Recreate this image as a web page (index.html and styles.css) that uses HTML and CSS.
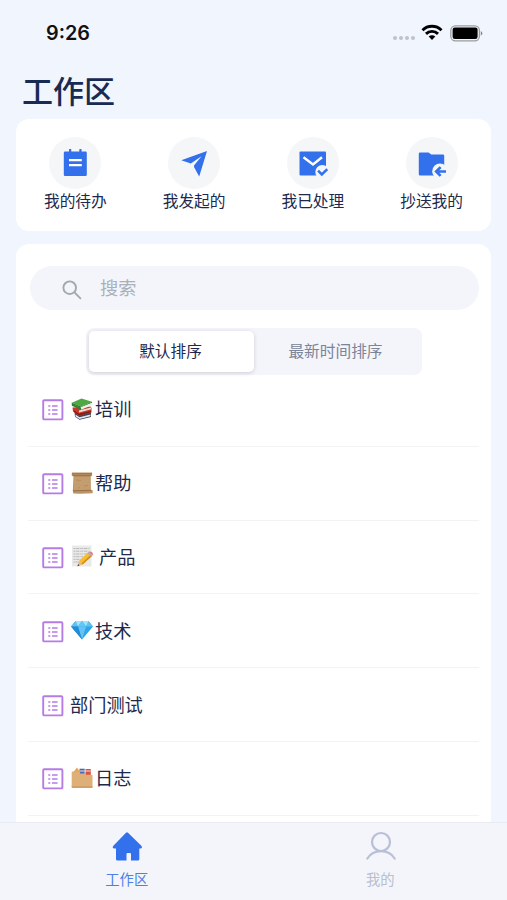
FILE: index.html
```html
<!DOCTYPE html>
<html lang="zh-CN">
  <head>
    <meta charset="UTF-8" />
    <meta name="viewport" content="width=device-width, initial-scale=1.0" />
    <title>工作区</title>
    <link rel="stylesheet" href="styles.css">
  </head>
  <body>
    <svg class="symbols" width="0" height="0">
      <symbol id="list" viewBox="0 0 22 22">
        <rect x="1.2" y="1.2" width="19.2" height="19.2" rx="1" fill="none" stroke="#b57ce6" stroke-width="1.9" />
        <path d="M6.3 7h2M6.3 11h2M6.3 15h2M10 7h5.6M10 11h5.6M10 15h5.6" stroke="#b57ce6" stroke-width="1.5" />
      </symbol>
    </svg>

    <header class="statusbar">
      <span class="clock">9:26</span>
      <div class="signals">
        <svg width="24" height="6" viewBox="0 0 24 6" class="dots">
          <g fill="#bfc2c8">
            <circle cx="3" cy="3" r="2" /><circle cx="9" cy="3" r="2" />
            <circle cx="15" cy="3" r="2" /><circle cx="21" cy="3" r="2" />
          </g>
        </svg>
        <svg width="22" height="17" viewBox="0 0 22 17" class="wifi">
          <g fill="none" stroke="#000" stroke-width="2.9">
            <path d="M1.5 6.2a13.5 13.5 0 0 1 19 0" />
            <path d="M5 9.9a8.500 8.500 0 0 1 12 0" />
          </g>
          <path d="M7.7 12.6a4.700 4.700 0 0 1 6.600 0L11 16z" />
        </svg>
        <svg width="33" height="17" viewBox="0 0 33 17">
          <rect x=".8" y=".8" width="28.6" height="15" rx="4.6" fill="none" stroke="#9b9da1" stroke-width="1.3" />
          <rect x="2.6" y="2.6" width="25" height="11.4" rx="2.2" />
          <path d="M30.8 5.900q1.500.8 1.500 2.400t-1.500 2.400z" fill="#85878b" />
        </svg>
      </div>
    </header>

    <h1 class="title">工作区</h1>

    <nav class="card shortcuts">
      <a class="shortcut">
        <span class="circle">
          <svg width="28" height="30" viewBox="0 0 28 30">
            <path d="M4 3.500H8V1.500q0-.6.6-.6H9.700q.6 0 .6.6v2h8V1.500q0-.6.6-.6h1.100q.6 0 .6.6v2h4q1.200 0 1.200 1.200v22q0 1.200-1.200 1.200H4q-1.200 0-1.200-1.200v-22q0-1.200 1.200-1.200z" fill="#3370eb" />
            <path d="M8 12.200h12.800M8 17.200h12.800" stroke="#fff" stroke-width="2.300" />
          </svg>
        </span>
        我的待办
      </a>
      <a class="shortcut">
        <span class="circle">
          <svg width="28" height="30" viewBox="0 0 28 30">
            <path d="M27 3L1.300 12.200L10.800 15.600L21.500 8.300L14 17.500V19L19.200 28.500z" fill="#3370eb" />
          </svg>
        </span>
        我发起的
      </a>
      <a class="shortcut">
        <span class="circle">
          <svg width="30" height="30" viewBox="0 0 30 30">
            <rect x="1.500" y="3.500" width="26.500" height="24" rx="1" fill="#3370eb" />
            <path d="M5.500 9.200l9.500 7.300l9-7.300" fill="none" stroke="#fff" stroke-width="2.400" />
            <circle cx="24.300" cy="24" r="7" fill="#f4f6f8" />
            <path d="M20.100 22.700l3.700 3.700l5.500-5.200" fill="none" stroke="#3370eb" stroke-width="2.500" />
          </svg>
        </span>
        我已处理
      </a>
      <a class="shortcut">
        <span class="circle">
          <svg width="30" height="30" viewBox="0 0 30 30">
            <path d="M3 4.500h8.500l2.800 2H26q1.200 0 1.200 1.200v18.600q0 1.200-1.200 1.200H3q-1.200 0-1.200-1.200V5.700q0-1.200 1.200-1.200z" fill="#3370eb" />
            <circle cx="23" cy="23.200" r="7.800" fill="#f4f6f8" />
            <path d="M29 23.500H20M23.600 19.100l-4.400 4.400l4.400 4.400" fill="none" stroke="#3370eb" stroke-width="2.700" />
          </svg>
        </span>
        抄送我的
      </a>
    </nav>

    <main class="card content">
      <div class="search">
        <svg width="20" height="20" viewBox="0 0 20 20">
          <g fill="none" stroke="#a3a8ae" stroke-width="1.900">
            <circle cx="7.700" cy="7.700" r="6.300" />
            <path d="M12.200 12.200l6.700 6.700" />
          </g>
        </svg>
        <span>搜索</span>
      </div>

      <div class="sort">
        <div class="sort-item active">默认排序</div>
        <div class="sort-item">最新时间排序</div>
      </div>

      <ul class="groups">
        <li class="group">
          <svg class="list-icon"><use href="#list" /></svg>
          <svg class="emoji" viewBox="0 0 22 22">
            <path d="M3.500 14.500l15-1 1.500 1v4.500L8.500 21.700l-4.500-3z" fill="#39445f" />
            <path d="M4.500 16.500l4 2.700L19.500 16.500v1.700l-11 2.700-4-2.500z" fill="#e4e4e6" />
            <path d="M1.500 9.500l18-1 1 1.500v4.500L7.500 18 2 13.500z" fill="#cf3828" />
            <path d="M2.500 12l5.500 3.800 12-3v1.400L8 17.400 3 13.800z" fill="#7e1d18" />
            <path d="M8 12.500l12-3v1.800L8 14.500z" fill="#ecdedb" />
            <path d="M.8 4.700L10.500.5 21 3.700l-11 4.800z" fill="#4fa943" />
            <path d="M.8 4.700l9.200 3.800 11-4.800v1.200L10 10.300l-9-4z" fill="#2e7a30" />
            <path d="M9.500 9.200L21 4.700v2.600L10 11.800z" fill="#eef0e8" />
            <path d="M.8 4.700v3l9 4 .5-1.400-8-3.800z" fill="#31822f" />
          </svg>
          <span>培训</span>
        </li>
        <li class="group">
          <svg class="list-icon"><use href="#list" /></svg>
          <svg class="emoji" viewBox="0 0 22 22">
            <path d="M1 .5h20v3.200l-1.300.4.200 14 1.800.2v2.900q-8 .7-19.400.4l-.5-2.500.7-15L.7 3.500z" fill="#bc9365" />
            <path d="M3.200 4.500h15.600l.2 13.500H2.500z" fill="#c49d6e" />
            <path d="M.8 1.800h20.400M1.300 3.700h19M2 18.800l18.500-.5" stroke="#8a6038" stroke-width=".7" />
            <path d="M5 8l5 .5M13 14l4-.5M7 16l2-.3" stroke="#b18453" stroke-width=".7" />
          </svg>
          <span>帮助</span>
        </li>
        <li class="group">
          <svg class="list-icon"><use href="#list" /></svg>
          <svg class="emoji" viewBox="0 0 22 22">
            <path d="M1 .5h19.500v21H1z" fill="#e9e9e7" />
            <path d="M2.500 3.500h16M2.500 6.200h16M2.500 9h14M2.500 11.700h10M2.500 14.400h7M2.500 17h5" stroke="#b2b3b5" stroke-width=".9" stroke-dasharray="2 .7 3 .6 1 .5" />
            <path d="M6.500 21.300l1.300-5.300 3.800 3.500z" fill="#e4b98a" />
            <path d="M6.500 21.300l.6-2.200 1.400 1.400z" fill="#444" />
            <path d="M7.800 16L17 7.500l4 3.400-9.400 8.600z" fill="#f7bd32" />
            <path d="M10.400 18.400l9.400-8.600 1.200 1.100-9.400 8.600z" fill="#d48a20" />
            <path d="M16.200 8.200l1.300-1.200 4.100 3.400-1.300 1.200z" fill="#a9b2b5" />
            <path d="M17.500 7q1.900-1.300 3.600.2 1.500 1.500.5 3.200z" fill="#e8798b" />
          </svg>
          <span class="spaced">产品</span>
        </li>
        <li class="group">
          <svg class="list-icon"><use href="#list" /></svg>
          <svg class="emoji" viewBox="0 0 22 22">
            <path d="M4.500 2h13L22 7.500 11 20.500 0 7.500z" fill="#2ea5e9" />
            <path d="M4.500 2L7 7.500H0zM17.500 2L15 7.500h7z" fill="#5cc2f3" />
            <path d="M4.500 2h6.500L7 7.500zM11 2h6.500L15 7.500z" fill="#a4e2fb" />
            <path d="M11 2l4 5.500H7z" fill="#63c7f5" />
            <path d="M7 7.500h8l-4 13z" fill="#64c3f4" />
            <path d="M0 7.500h7l4 13z" fill="#248cd6" />
          </svg>
          <span>技术</span>
        </li>
        <li class="group">
          <svg class="list-icon"><use href="#list" /></svg>
          <span class="plain">部门测试</span>
        </li>
        <li class="group">
          <svg class="list-icon"><use href="#list" /></svg>
          <svg class="emoji" viewBox="0 0 22 22">
            <path d="M2.500 5L6 .5l3 4.500z" fill="#e7a44e" />
            <path d="M8.500 1.700h5.200V7H8.500z" fill="#4b69b4" />
            <path d="M14.500 2h5.300V8h-5.300z" fill="#dc4f43" />
            <path d="M8.700 4h11" stroke="#f4dfce" />
            <path d="M.7 5.500q0-1 1-1h5.500l2 2h5l1 1.200h5.300q1 0 1 1V20q0 1-1 1H1.700q-1 0-1-1z" fill="#deb078" />
            <path d="M.7 19h20.800v1q0 1-1 1H1.700q-1 0-1-1z" fill="#d2a067" />
          </svg>
          <span>日志</span>
        </li>
      </ul>
    </main>

    <footer class="tabbar">
      <a class="tab current">
        <svg width="32" height="32" viewBox="0 0 32 32">
          <path d="M15 1.800q1-.9 2 0L30.300 14.800q.9.900.6 2-.3.700-1.400.7h-1.200v10.700q0 1.300-1.300 1.300h-7v-6.500q0-1-1-1h-2.500q-1 0-1 1v6.500H6.300Q5 29.500 5 28.200V17.500H3.200q-1.100 0-1.400-.7-.3-1.100.6-2z" fill="#3370eb" />
        </svg>
        工作区
      </a>
      <a class="tab">
        <svg width="32" height="32" viewBox="0 0 32 32">
          <g fill="none" stroke="#b9bfd7" stroke-width="2.200" stroke-linecap="round">
            <circle cx="17" cy="11" r="9" />
            <path d="M3.300 27.500Q8 20.200 17 20.200T30.700 27.500" />
          </g>
        </svg>
        我的
      </a>
    </footer>
  </body>
</html>
```

FILE: styles.css
```css
* {
  box-sizing: border-box;
}
body {
  display: flex;
  flex-direction: column;
  height: 900px;
  margin: 0;
  overflow: hidden;
  background-color: #f1f5fd;
  color: #20294c;
  font-family: "Noto Sans CJK SC", sans-serif;
}
.symbols {
  display: none;
}
.statusbar {
  display: flex;
  flex: none;
  justify-content: space-between;
  height: 66px;
  padding: 21px 24px 0 46px;
}
.clock {
  color: #111;
  font-family: Inter, sans-serif;
  font-size: 19.8px;
  font-weight: 600;
  line-height: 25px;
}
.signals {
  display: flex;
  padding-top: 4px;
}
.dots {
  margin: 10px 5px 0 0;
}
.wifi {
  margin: -1px 7px 0 0;
}
.title {
  flex: none;
  height: 53px;
  margin: 0;
  padding-left: 22px;
  color: #182b52;
  font-size: 31px;
  font-weight: 500;
  line-height: 47px;
}
.card {
  flex: none;
  margin: 0 16px;
  background-color: #fff;
  border-radius: 13px;
}
.shortcuts {
  display: flex;
  height: 112px;
  padding-top: 18px;
}
.shortcut {
  display: flex;
  flex: 1;
  flex-direction: column;
  align-items: center;
  font-size: 15.7px;
  line-height: 24px;
}
.circle {
  display: flex;
  align-items: center;
  justify-content: center;
  width: 52px;
  height: 52px;
  border-radius: 50%;
  background-color: #f4f6f8;
}
.content {
  flex: 1;
  min-height: 0;
  margin-top: 13px;
  padding: 22px 12px 0;
  overflow: hidden;
  border-radius: 13px 13px 0 0;
}
.search {
  display: flex;
  align-items: center;
  gap: 18px;
  height: 44px;
  margin-left: 2px;
  padding-left: 32px;
  border-radius: 22px;
  background-color: #f3f5fa;
  color: #a9b0ba;
  font-size: 18.2px;
  line-height: 42px;
}
.search svg {
  margin-top: 3px;
}
.search span {
  margin-top: -2px;
}
.sort {
  display: flex;
  width: 336px;
  height: 47px;
  margin: 18px 0 0 58px;
  padding: 3px;
  border-radius: 8px;
  background-color: #f3f5fa;
}
.sort-item {
  flex: 1;
  padding-right: 2px;
  color: #7b8499;
  font-size: 15.7px;
  line-height: 40px;
  text-align: center;
}
.active {
  border-radius: 5px;
  background-color: #fff;
  box-shadow: 0 1px 4px rgba(0, 0, 0, 0.16);
  color: #20294c;
}
.groups {
  margin: -2px 0 0;
  padding: 0;
  list-style: none;
}
.group {
  display: flex;
  align-items: center;
  height: 73.8px;
  padding-left: 14px;
  border-bottom: 1px solid #f2f3f5;
  font-size: 18.2px;
  line-height: 30px;
}
.list-icon {
  width: 22px;
  height: 22px;
  margin-top: 2px;
}
.emoji {
  width: 22px;
  height: 22px;
  margin: -1px 2px 0 7px;
}
.group span {
  margin-top: -2px;
}
.group .spaced {
  margin-left: 4px;
}
.group .plain {
  margin-left: 6px;
}
.tabbar {
  display: flex;
  flex: none;
  height: 78px;
  padding-top: 8px;
  border-top: 1px solid #e9ebf0;
  background-color: #f3f5fa;
}
.tab {
  display: flex;
  flex: 1;
  flex-direction: column;
  align-items: center;
  gap: 3px;
  color: #b9bfd0;
  font-size: 14.3px;
  line-height: 25px;
}
.current {
  color: #4c7fe8;
}
```
